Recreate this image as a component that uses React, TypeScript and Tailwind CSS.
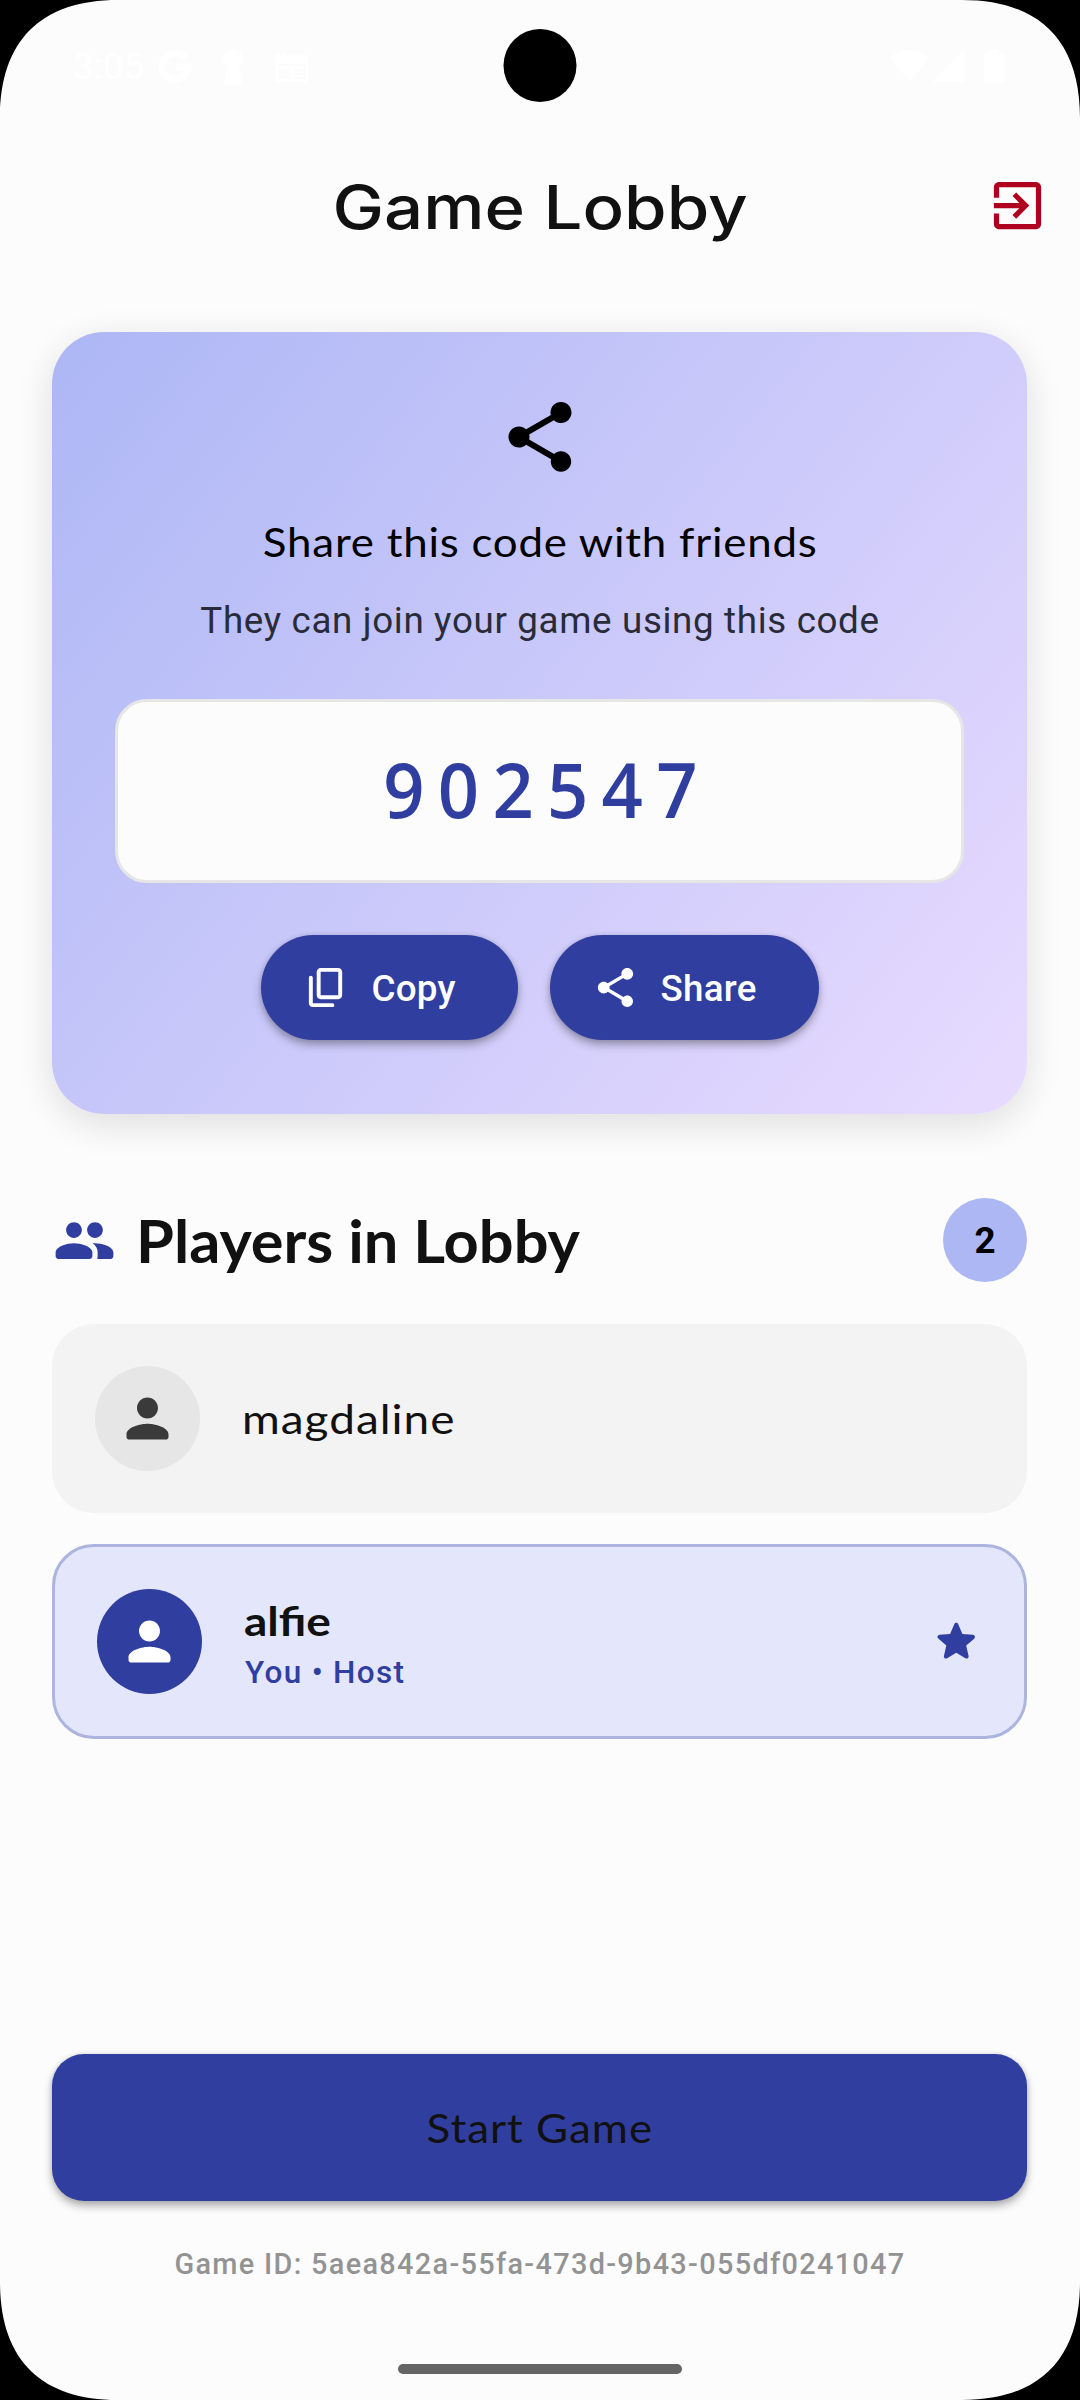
import React from "react";

type IconProps = { d: string; className?: string };

function Icon({ d, className }: IconProps) {
  return (
    <svg viewBox="0 0 24 24" fill="currentColor" className={className} aria-hidden="true">
      <path d={d} />
    </svg>
  );
}

const SHARE =
  "M18 16.08c-.76 0-1.44.3-1.96.77L8.91 12.7c.05-.23.09-.46.09-.7s-.04-.47-.09-.7l7.05-4.11c.54.5 1.25.81 2.04.81 1.66 0 3-1.34 3-3s-1.34-3-3-3-3 1.34-3 3c0 .24.04.47.09.7L8.04 9.81C7.5 9.31 6.79 9 6 9c-1.66 0-3 1.34-3 3s1.34 3 3 3c.79 0 1.5-.31 2.04-.81l7.12 4.16c-.05.21-.08.43-.08.65 0 1.61 1.31 2.92 2.92 2.92s2.92-1.31 2.92-2.92-1.31-2.92-2.92-2.92z";
const COPY =
  "M15 20H5V7c0-.55-.45-1-1-1s-1 .45-1 1v13c0 1.1.9 2 2 2h10c.55 0 1-.45 1-1s-.45-1-1-1zm5-4V4c0-1.1-.9-2-2-2H9c-1.1 0-2 .9-2 2v12c0 1.1.9 2 2 2h9c1.1 0 2-.9 2-2zm-2 0H9V4h9v12z";
const EXIT =
  "M10.09 15.59L11.5 17l5-5-5-5-1.41 1.41L12.67 11H3v2h9.67l-2.58 2.59zM19 3H5c-1.11 0-2 .9-2 2v4h2V5h14v14H5v-4H3v4c0 1.1.89 2 2 2h14c1.1 0 2-.9 2-2V5c0-1.1-.9-2-2-2z";
const PEOPLE =
  "M16 11c1.66 0 2.99-1.34 2.99-3S17.66 5 16 5s-3 1.34-3 3 1.34 3 3 3zm-8 0c1.66 0 2.99-1.34 2.99-3S9.66 5 8 5 5 6.34 5 8s1.34 3 3 3zm0 2c-2.33 0-7 1.17-7 3.5V18c0 .55.45 1 1 1h12c.55 0 1-.45 1-1v-1.5c0-2.33-4.67-3.5-7-3.5zm8 0c-.29 0-.62.02-.97.05.02.01.03.03.04.04 1.14.83 1.93 1.94 1.93 3.41V18c0 .35-.07.69-.18 1H22c.55 0 1-.45 1-1v-1.5c0-2.33-4.67-3.5-7-3.5z";
const PERSON =
  "M12 12c2.21 0 4-1.79 4-4s-1.79-4-4-4-4 1.79-4 4 1.79 4 4 4zm0 2c-2.67 0-8 1.34-8 4v1c0 .55.45 1 1 1h14c.55 0 1-.45 1-1v-1c0-2.66-5.33-4-8-4z";
const STAR =
  "M12 17.27l4.15 2.51c.76.46 1.69-.22 1.49-1.08l-1.1-4.72 3.67-3.18c.67-.58.31-1.68-.57-1.75l-4.83-.41-1.89-4.46c-.34-.81-1.5-.81-1.84 0L9.19 8.63l-4.83.41c-.88.07-1.24 1.17-.57 1.75l3.67 3.18-1.1 4.72c-.2.86.73 1.54 1.49 1.08l4.15-2.5z";
const CORNER = "M0 0H118C40.7 0 0 40.7 0 118Z";

function StatusBar() {
  return (
    <div className="flex h-[137px] items-start justify-between pl-[73px] pr-[75px] pt-[44px] text-white">
      <div className="flex items-center">
        <span className="w-[77px] font-['Roboto',sans-serif] text-[37px] leading-[46px]">3:05</span>
        <svg viewBox="0 0 34 34" className="ml-[8px] size-[34px]" fill="none" stroke="currentColor" strokeWidth="7">
          <path d="M27 8A13 13 0 1 0 30 17H18" />
        </svg>
        <svg viewBox="0 0 20 36" className="ml-[31px] h-[36px] w-[20px]" fill="currentColor">
          <circle cx="10" cy="10" r="10" />
          <path d="M5 14h10l4.500 22H0.500z" />
        </svg>
        <svg viewBox="0 0 33 31" className="ml-[32px] h-[31px] w-[33px]" fill="currentColor" fillRule="evenodd">
          <path d="M0 4l3-3 3 3 3-3 3 3 3-3 3 3 3-3 3 3 3-3 3 3 3-3v26a3 3 0 0 1-3 3H3a3 3 0 0 1-3-3zM3 12v2h27v-2zM3 17v10h13V17zM19 17v2h11v-2zM19 21v2h11v-2zM19 25v2h11v-2z" />
        </svg>
      </div>
      <svg viewBox="0 0 115 35" className="mt-[5px] h-[35px] w-[115px]" fill="currentColor">
        <path d="M0 9C11-2 28-2 39 9L20 32Z" />
        <path d="M75 1V33H43Z" />
        <path d="M95 4h4V0h10v4h4a2 2 0 0 1 2 2v26a2 2 0 0 1-2 2H96a2 2 0 0 1-2-2V6z" />
      </svg>
    </div>
  );
}

function PillButton({ icon, label, width }: { icon: string; label: string; width: string }) {
  return (
    <button
      className={`flex h-[105px] items-center rounded-full bg-[#303e9f] pl-[42px] text-white shadow-[0_5px_8px_rgba(0,0,0,0.3),0_0_5px_rgba(0,0,0,0.1)] ${width}`}
    >
      <Icon d={icon} className="size-[47px]" />
      <span className="ml-[22px] pt-[2px] font-['Roboto',sans-serif] text-[36.75px] font-medium leading-[48px] tracking-[0.26px]">
        {label}
      </span>
    </button>
  );
}

function ShareCard() {
  return (
    <section className="mt-[58px] flex h-[782px] flex-col items-center rounded-[52px] bg-[linear-gradient(128.7deg,#adb7f5_0%,#e8dbff_100%)] px-[63px] pt-[63px] shadow-[0_10px_37px_rgba(0,0,0,0.12)]">
      <Icon d={SHARE} className="size-[84px] text-black" />
      <h2 className="ml-[2px] mt-[33px] scale-x-[1.07] whitespace-nowrap font-['Lato',sans-serif] text-[41px] leading-[60px] tracking-[0.72px] text-black">
        Share this code with friends
      </h2>
      <p className="ml-px mt-[23px] whitespace-nowrap font-['Roboto',sans-serif] text-[36.75px] leading-[52px] tracking-[0.65px] text-[#292b38]">
        They can join your game using this code
      </p>
      <div className="mt-[52px] flex h-[184px] w-full items-center justify-center rounded-[32px] border-[3px] border-[#e6e6e6] bg-[#fcfcfc]">
        <span className="scale-x-[0.95] pb-[5px] pl-[15px] font-['Open_Sans',sans-serif] text-[76px] font-semibold leading-[100px] tracking-[14px] text-[#303e9f]">
          902547
        </span>
      </div>
      <div className="mt-[52px] flex gap-[32px]">
        <PillButton icon={COPY} label="Copy" width="w-[257px]" />
        <PillButton icon={SHARE} label="Share" width="w-[269px]" />
      </div>
    </section>
  );
}

export default function App() {
  return (
    <div className="relative flex h-[2400px] w-[1080px] flex-col overflow-hidden bg-[#fcfcfc] text-[#111111]">
      <StatusBar />
      <header className="relative flex h-[137px] items-center justify-center">
        <h1 className="scale-x-[1.14] whitespace-nowrap pt-[3px] font-['Inter',sans-serif] text-[60.5px] font-medium leading-[76px]">
          Game Lobby
        </h1>
        <button className="absolute right-[31px] text-[#b00020]">
          <Icon d={EXIT} className="size-[63px]" />
        </button>
      </header>

      <main className="flex flex-1 flex-col pl-[52px] pr-[53px]">
        <ShareCard />

        <div className="mt-[84px] flex h-[84px] items-center">
          <Icon d={PEOPLE} className="ml-[0.5px] size-[63px] text-[#303e9f]" />
          <h2 className="ml-[20.5px] origin-left scale-x-[1.04] whitespace-nowrap pt-px font-['Lato',sans-serif] text-[59px] font-bold leading-[84px]">
            Players in Lobby
          </h2>
          <span className="ml-auto flex size-[84px] items-center justify-center rounded-full bg-[#adb7f4] pt-px font-['Roboto',sans-serif] text-[36.75px] font-bold text-black">
            2
          </span>
        </div>

        <div className="mt-[42px] flex h-[189px] items-center rounded-[42px] bg-[#f3f3f3] px-[42px]">
          <div className="ml-[0.5px] flex size-[105px] items-center justify-center rounded-full bg-[#e6e6e6] text-[#3a3a3a]">
            <Icon d={PERSON} className="size-[63px]" />
          </div>
          <span className="ml-[42.5px] origin-left scale-x-[1.12] pt-px font-['Lato',sans-serif] text-[41px] leading-[56px] tracking-[0.9px]">
            magdaline
          </span>
        </div>

        <div className="mt-[31px] flex h-[195px] items-center rounded-[42px] border-[3px] border-[#acb4df] bg-[#e4e7fb] px-[42px]">
          <div className="flex size-[105px] items-center justify-center rounded-full bg-[#303e9f] text-white">
            <Icon d={PERSON} className="size-[63px]" />
          </div>
          <div className="ml-[42px] flex flex-col items-start gap-[2px] pt-[5px]">
            <span className="origin-left scale-x-[1.12] font-['Lato',sans-serif] text-[41px] font-bold leading-[56px]">
              alfie
            </span>
            <span className="ml-[1px] font-['Roboto',sans-serif] text-[31.5px] font-medium leading-[44px] tracking-[1.3px] text-[#303e9f]">
              You • Host
            </span>
          </div>
          <Icon d={STAR} className="ml-auto size-[52.5px] text-[#303e9f]" />
        </div>

        <button className="mt-auto flex h-[147px] items-center justify-center rounded-[32px] bg-[#303e9f] shadow-[0_5px_8px_rgba(0,0,0,0.3),0_0_5px_rgba(0,0,0,0.1)]">
          <span className="ml-px scale-x-[1.07] font-['Lato',sans-serif] text-[41px] leading-[56px] tracking-[0.96px] text-[#111111]">
            Start Game
          </span>
        </button>
        <p className="mt-[42px] whitespace-nowrap pl-px text-center font-['Roboto',sans-serif] text-[28.875px] font-medium leading-[42px] tracking-[1.32px] text-[#939393]">
          Game ID: 5aea842a-55fa-473d-9b43-055df0241047
        </p>
        <div className="mb-[26px] mt-[79px] h-[10px] w-[284px] self-center rounded-full bg-[#656565]" />
      </main>

      <div className="absolute left-1/2 top-[29px] size-[73px] -translate-x-1/2 rounded-full bg-black" />
      <svg viewBox="0 0 118 118" className="absolute left-0 top-0 size-[118px]"><path d={CORNER} /></svg>
      <svg viewBox="0 0 118 118" className="absolute right-0 top-0 size-[118px] -scale-x-100"><path d={CORNER} /></svg>
      <svg viewBox="0 0 118 118" className="absolute bottom-0 left-0 size-[118px] -scale-y-100"><path d={CORNER} /></svg>
      <svg viewBox="0 0 118 118" className="absolute bottom-0 right-0 size-[118px] rotate-180"><path d={CORNER} /></svg>
    </div>
  );
}
